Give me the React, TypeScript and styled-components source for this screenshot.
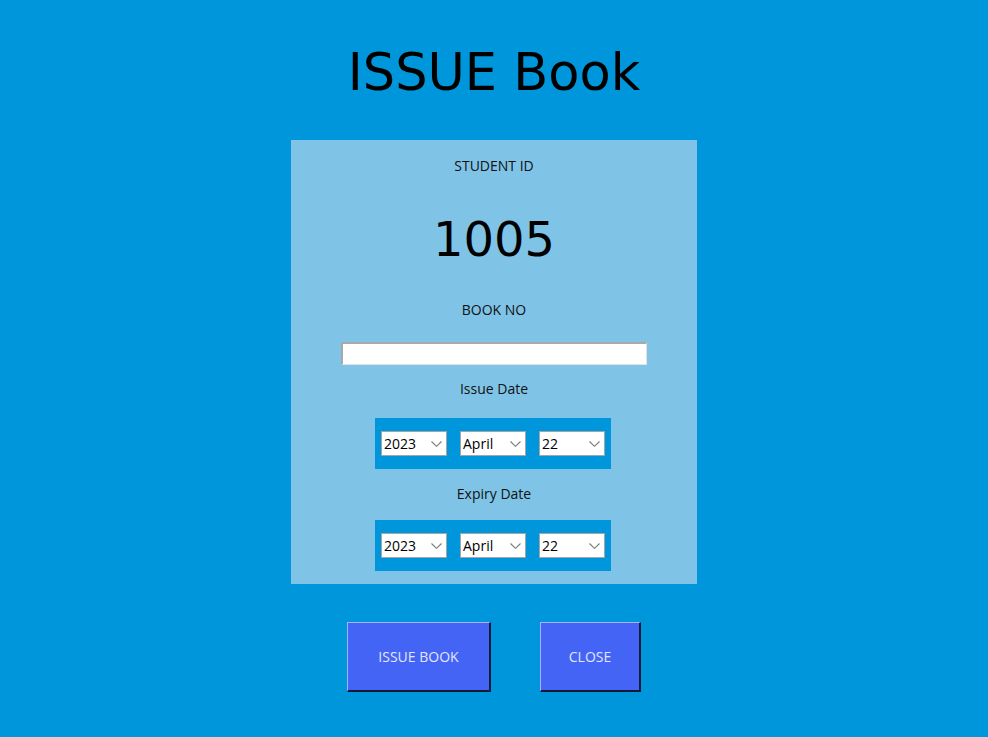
import React from "react";
import styled, { createGlobalStyle } from "styled-components";

const Global = createGlobalStyle`
  html, body { margin: 0; padding: 0; background: #0096db; }
  body { font-family: "Open Sans", "Noto Sans", sans-serif; }
`;

const Page = styled.div`
  width: 988px;
  height: 737px;
  background: #0096db;
  display: flex;
  flex-direction: column;
  align-items: center;
  box-sizing: border-box;
  padding-top: 43px;
`;

const Title = styled.h1`
  margin: 0;
  font-family: "DejaVu Sans", Verdana, sans-serif;
  font-weight: normal;
  font-size: 51px;
  line-height: 60px;
  height: 60px;
  color: #000;
`;

const Panel = styled.div`
  margin-top: 37px;
  width: 406px;
  background: #7fc4e7;
  display: flex;
  flex-direction: column;
  align-items: center;
  box-sizing: border-box;
  padding: 16px 0 13px;
`;

const Label = styled.div<{ $gap?: number }>`
  margin-top: ${(p) => p.$gap ?? 0}px;
  font-size: 14px;
  line-height: 20px;
  height: 20px;
  color: #111;
`;

const BigId = styled.div<{ $gap: number }>`
  margin-top: ${(p) => p.$gap}px;
  font-family: "DejaVu Sans", Verdana, sans-serif;
  font-size: 48px;
  line-height: 56px;
  height: 56px;
  color: #000;
`;

const TextInput = styled.input<{ $gap: number }>`
  margin-top: ${(p) => p.$gap}px;
  width: 306px;
  height: 23px;
  box-sizing: border-box;
  background: #fff;
  border: none;
  border-top: 2px solid #a9a9a9;
  border-left: 2px solid #a9a9a9;
  border-right: 1px solid #e3e3e3;
  border-bottom: 1px solid #e3e3e3;
  outline: none;
  padding: 0 3px;
  font-family: "Open Sans", sans-serif;
  font-size: 13px;
`;

const DateBox = styled.div<{ $gap: number }>`
  margin-top: ${(p) => p.$gap}px;
  margin-right: 2px;
  width: 236px;
  height: 51px;
  box-sizing: border-box;
  background: #0096db;
  display: flex;
  align-items: center;
  padding: 0 6px;
  gap: 13px;
`;

const SelectWrap = styled.div`
  position: relative;
  width: 66px;
  height: 25px;
`;

const Select = styled.select`
  appearance: none;
  -webkit-appearance: none;
  width: 66px;
  height: 25px;
  box-sizing: border-box;
  margin: 0;
  border: 1px solid #a5a5a5;
  border-radius: 0;
  background: #fff;
  color: #000;
  font-family: "Open Sans", sans-serif;
  font-size: 14px;
  padding: 0 0 0 2px;
  outline: none;
`;

const Chevron = styled.svg`
  position: absolute;
  right: 5px;
  top: 10px;
  width: 11px;
  height: 6px;
  pointer-events: none;
`;

const ButtonRow = styled.div`
  margin-top: 38px;
  display: flex;
  gap: 49px;
`;

const Button = styled.button<{ $w: number }>`
  width: ${(p) => p.$w}px;
  height: 70px;
  box-sizing: border-box;
  background: #4364f5;
  color: #e4e6ff;
  font-family: "Open Sans", sans-serif;
  font-size: 14px;
  border-top: 1px solid #a3b3ff;
  border-left: 1px solid #a3b3ff;
  border-right: 2px solid #121a3a;
  border-bottom: 2px solid #121a3a;
  padding: 0;
  cursor: pointer;
`;

const Drop: React.FC<{ value: string; options: string[] }> = ({ value, options }) => (
  <SelectWrap>
    <Select defaultValue={value}>
      {options.map((o) => (
        <option key={o} value={o}>
          {o}
        </option>
      ))}
    </Select>
    <Chevron viewBox="0 0 11 6">
      <path d="M0.5 0.5 L5.5 5.3 L10.5 0.5" fill="none" stroke="#7a7a7a" strokeWidth="1.1" />
    </Chevron>
  </SelectWrap>
);

const years = ["2021", "2022", "2023", "2024", "2025"];
const months = [
  "January", "February", "March", "April", "May", "June",
  "July", "August", "September", "October", "November", "December",
];
const days = Array.from({ length: 31 }, (_, i) => String(i + 1));

const DatePicker: React.FC<{ gap: number }> = ({ gap }) => (
  <DateBox $gap={gap}>
    <Drop value="2023" options={years} />
    <Drop value="April" options={months} />
    <Drop value="22" options={days} />
  </DateBox>
);

export default function App() {
  return (
    <>
      <Global />
      <Page>
        <Title>ISSUE Book</Title>
        <Panel>
          <Label>STUDENT ID</Label>
          <BigId $gap={35}>1005</BigId>
          <Label $gap={33}>BOOK NO</Label>
          <TextInput $gap={22} />
          <Label $gap={14}>Issue Date</Label>
          <DatePicker gap={19} />
          <Label $gap={15}>Expiry Date</Label>
          <DatePicker gap={16} />
        </Panel>
        <ButtonRow>
          <Button $w={144}>ISSUE BOOK</Button>
          <Button $w={101}>CLOSE</Button>
        </ButtonRow>
      </Page>
    </>
  );
}
